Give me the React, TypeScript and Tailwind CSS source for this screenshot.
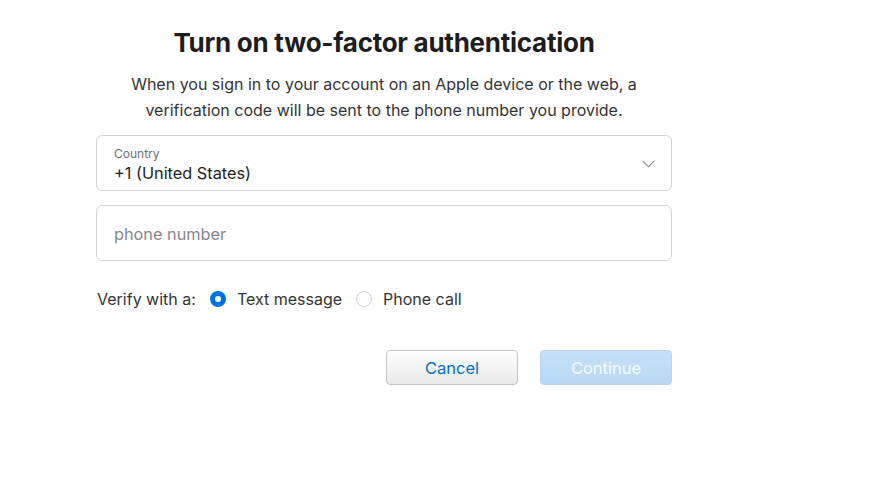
import { useState } from "react";

/* ───────────────────────── Icons ───────────────────────── */

const ChevronDown = () => (
  <svg viewBox="0 0 14 8" fill="none" stroke="currentColor" strokeWidth="1.2" className="w-[13px] h-[8px]">
    <path d="M1 1l6 6 6-6" />
  </svg>
);

/* ───────────────────────── Radio ───────────────────────── */

function Radio({ checked, label, onClick }: { checked: boolean; label: string; onClick: () => void }) {
  return (
    <button type="button" onClick={onClick} className="flex items-center gap-[11px]">
      {checked ? (
        <span className="w-4 h-4 rounded-full bg-[#0071e3] flex items-center justify-center">
          <span className="w-[6px] h-[6px] rounded-full bg-white" />
        </span>
      ) : (
        <span className="w-4 h-4 rounded-full border border-[#d2d2d7] bg-white" />
      )}
      <span>{label}</span>
    </button>
  );
}

/* ───────────────────────── Component ───────────────────────── */

export default function App() {
  const [method, setMethod] = useState<"sms" | "voice">("sms");

  return (
    <div className="min-h-screen bg-white text-[#1d1d1f] font-['Inter','Noto_Sans',sans-serif]">
      <div className="w-[576px] ml-[96px] pt-[25px]">
        <h1 className="text-center text-[26px] font-[650] tracking-[-0.01em] leading-[36px]">
          Turn on two-factor authentication
        </h1>
        <p className="mt-[10px] text-center text-[16px] leading-[26px] text-[#333336]">
          When you sign in to your account on an Apple device or the web, a
          <br />
          verification code will be sent to the phone number you provide.
        </p>

        {/* Country select */}
        <div className="mt-[12px] h-[56px] rounded-[6px] border border-[#d2d2d7] flex items-center justify-between pl-[17px] pr-[16px]">
          <div className="flex flex-col pt-[4px]">
            <span className="text-[12px] leading-[16px] text-[#6e6e73]">Country</span>
            <span className="text-[16.3px] leading-[22px]">+1 (United States)</span>
          </div>
          <span className="text-[#86868b] mt-[2px]">
            <ChevronDown />
          </span>
        </div>

        {/* Phone number */}
        <input
          placeholder="phone number"
          className="mt-[14px] w-full h-[56px] rounded-[6px] border border-[#d2d2d7] px-[17px] pt-[2px] text-[16.3px] outline-none placeholder:text-[#86868b]"
        />

        {/* Verification method */}
        <div className="mt-[27px] flex items-center text-[16px] leading-[22px] text-[#333336]">
          <span className="ml-px mr-[14px]">Verify with a:</span>
          <div className="flex items-center gap-[14px]">
            <Radio checked={method === "sms"} label="Text message" onClick={() => setMethod("sms")} />
            <Radio checked={method === "voice"} label="Phone call" onClick={() => setMethod("voice")} />
          </div>
        </div>

        {/* Actions */}
        <div className="mt-[40px] flex justify-end gap-[22px]">
          <button className="w-[132px] h-[35px] pt-px rounded-[4px] border border-[#c6c6c6] bg-gradient-to-b from-white to-[#e8e8e8] text-[#0070c9] text-[16.5px]">
            Cancel
          </button>
          <button disabled className="w-[132px] h-[35px] pt-px rounded-[4px] border border-[#b4d6f1] bg-gradient-to-b from-[#c4e0f6] to-[#b8d9f3] text-white/90 text-[16.5px]">
            Continue
          </button>
        </div>
      </div>
    </div>
  );
}
